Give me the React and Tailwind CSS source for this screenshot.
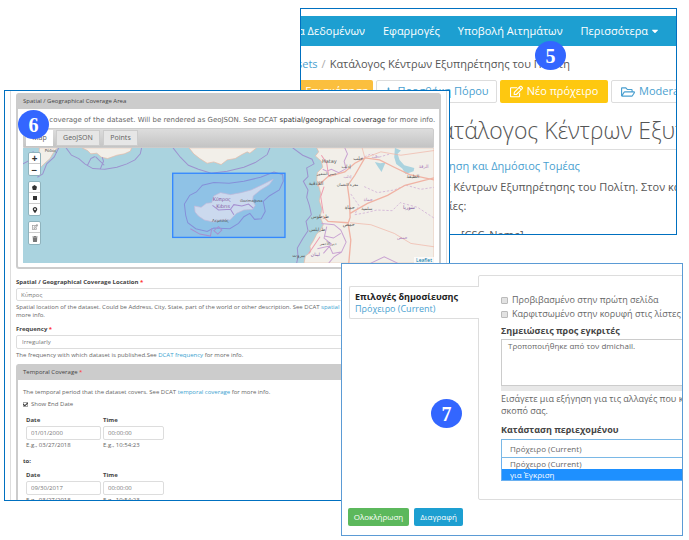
import { FaCaretDown, FaCheck, FaMapMarkerAlt, FaPlus, FaRegEdit, FaRegFolderOpen, FaTrash } from 'react-icons/fa';

const Badge = ({ children, className }) => (
  <div className={`absolute flex h-[29px] w-[31px] items-center justify-center rounded-[50%] bg-[#3366ff] font-['Liberation_Serif',serif] text-[20px] leading-none font-bold text-white ${className}`}>
    {children}
  </div>
);

const MapLabel = ({ x, y, size = 14, fill = '#555', children }) => (
  <text x={x} y={y} fontSize={size} fill={fill} textAnchor="middle" fontFamily="DejaVu Sans, sans-serif">{children}</text>
);

// --- COVERAGE MAP ---
const CoverageMap = () => (
  <svg viewBox="69 204 1230 345" preserveAspectRatio="xMidYMid slice" className="block h-[115px] w-full bg-[#aad3df]" role="img" aria-label="Map of Cyprus">
    {/* land */}
    <g fill="#f2efe9" stroke="#e8b9a4" strokeWidth="2">
      <path d="M118 204 L116 240 L122 262 L134 250 L150 236 L158 222 L172 204 Z" />
      <path d="M246 204 L262 212 L272 222 L290 220 L304 232 L322 236 L350 226 L372 222 L390 214 L394 204 Z" />
      <path d="M566 204 L580 222 L598 236 L620 250 L640 246 L662 254 L680 240 L704 236 L724 224 L740 216 L748 220 L768 204 Z" />
      <path d="M948 204 L954 216 L944 228 L962 244 L966 262 L950 278 L948 300 L954 318 L960 340 L956 362 L964 388 L958 410 L968 434 L958 452 L948 462 L938 482 L928 498 L930 516 L914 528 L910 549 L1299 549 L1299 204 Z" />
    </g>
    <g fill="#aad3df">
      <path d="M1182 204 L1200 212 L1190 222 L1196 240 L1210 256 L1240 264 L1238 274 L1214 282 L1204 266 L1186 252 L1180 232 Z" />
      <path d="M1122 246 L1138 250 L1154 248 L1148 262 L1142 276 L1132 262 Z" />
    </g>
    {/* territorial waters */}
    <g fill="none" stroke="#9c92cf" strokeWidth="3">
      <path d="M69 252 L84 244 L100 214 M176 204 L162 232 L140 252 L128 282 L112 292" />
      <path d="M198 204 L214 226 L236 236 L254 252 L278 266 L314 268 L350 262 L380 252 L404 240 L420 222 L424 204 M262 256 L272 236 L284 230 M300 268 L310 244 L306 232 M286 230 L312 256" />
      <path d="M518 204 L540 232 L564 256 L594 268 L632 280 L680 274 L730 262 L764 248 L800 224 L808 204" />
      <path d="M876 204 L906 226 L934 238 L940 252 L918 264 L922 290 L908 304 L922 330 L918 352 L926 376 L932 404 L916 424 L922 452 L906 476 L890 504 L892 530 L888 549" />
      <path d="M562 428 L556 406 L552 372 L568 346 L588 336 L606 316 L640 308 L686 310 L730 304 L780 292 L820 276 L846 284 L848 304 L836 330 L806 348 L788 364 L794 394 L782 416 L762 418 L748 400 L730 410 L714 430 L688 446 L640 444 L620 454 L586 446 Z" />
    </g>
    {/* borders */}
    <g fill="none" stroke="#c9a3d2" strokeWidth="3">
      <path d="M1032 204 L1040 222 L1030 244 L1036 266 L1014 278 L992 268 L978 274 L966 268" />
      <path d="M1080 236 L1110 222 L1134 232 L1168 222 M1090 320 L1130 338 L1180 330 L1216 316 L1260 328 L1299 322 M1050 342 L1074 376 L1062 404 L1096 398 L1128 390 L1174 392 L1198 368 L1250 382 L1299 414" strokeDasharray="7 5" strokeWidth="2" />
      <path d="M962 430 L1000 434 L1020 450 L1036 486 L1022 516 L1000 530 L984 549 M972 468 L998 474 L1020 460 M950 506 L986 498 L996 520 L1020 516 M978 440 L970 474 L992 492 L968 520 M1110 549 L1150 530 L1190 549" />
    </g>
    {/* roads */}
    <g fill="none" stroke="#f0b3a4" strokeWidth="4">
      <path d="M950 318 L982 290 L1032 276 L1062 250 L1092 234 L1136 240 L1180 262 L1226 284 L1299 300 M1092 234 L1062 286 L1040 318 L1046 360 L1048 412 L1042 430 L1050 480 L1044 549 M966 408 L982 424 L1042 428 M1048 400 L1100 370 L1160 346 L1212 316 L1299 294" />
      <path d="M1084 204 L1092 234 M1092 234 L1140 216 L1200 226 L1299 212 M1048 428 L1110 434 L1180 460 L1230 490 L1299 500" strokeWidth="2" />
      <path d="M970 320 L960 350 L968 400 M958 470 L924 520 M984 290 L978 250 L962 226" stroke="#ef9db0" strokeWidth="3" />
    </g>
    {/* selected area */}
    <rect x="517" y="280" width="336" height="192" fill="#3388ff" fillOpacity=".22" stroke="#3388ff" strokeWidth="4" />
    <path d="M582 378 L602 382 L618 370 L634 368 L640 348 L660 338 L690 344 L722 338 L752 330 L790 312 L818 298 L806 314 L780 330 L758 348 L756 362 L764 376 L756 388 L730 390 L708 400 L688 420 L660 420 L640 426 L612 420 L594 408 L584 396 Z" fill="#cbd9ee" stroke="#c5b8d9" strokeWidth="2" />
    <path d="M636 376 L654 390 L690 388 L700 374 L724 378 L744 372 L758 384 M570 446 L598 462 L630 468 L634 444 M640 452 L652 462 L664 450 L654 440 Z M690 388 L700 404" fill="none" stroke="#a58fd0" strokeWidth="3" />
    <MapLabel x={664} y={362} size={15} fill="#84599f">Κύπρος</MapLabel>
    <MapLabel x={668} y={383} size={15} fill="#84599f">Kıbrıs</MapLabel>
    <MapLabel x={752} y={367} size={11}>Gazimağusa</MapLabel>
    <MapLabel x={660} y={425} size={12}>Λεμεσός</MapLabel>
    <MapLabel x={152} y={215} size={12}>Ρόδος</MapLabel>
    <MapLabel x={986} y={249} size={15}>Hatay</MapLabel>
    <MapLabel x={1072} y={239} size={15}>حلب</MapLabel>
    <MapLabel x={1124} y={235} size={12} fill="#ac80b9">حلب</MapLabel>
    <MapLabel x={1036} y={265} size={14}>إدلب</MapLabel>
    <MapLabel x={1268} y={263} size={14} fill="#ac80b9">الرقة</MapLabel>
    <MapLabel x={1236} y={294} size={14}>الطبقة</MapLabel>
    <MapLabel x={978} y={286} size={11}>جسر الشغور</MapLabel>
    <MapLabel x={1040} y={294} size={12} fill="#ac80b9">إدلب</MapLabel>
    <MapLabel x={946} y={314} size={15}>اللاذقية</MapLabel>
    <MapLabel x={1040} y={318} size={12}>معرة النعمان</MapLabel>
    <MapLabel x={1102} y={362} size={13} fill="#ac80b9">حماة</MapLabel>
    <MapLabel x={1047} y={386} size={15}>حماة</MapLabel>
    <MapLabel x={1098} y={390} size={13}>سلمية</MapLabel>
    <MapLabel x={1224} y={386} size={15} fill="#84599f">سوريا</MapLabel>
    <MapLabel x={958} y={415} size={14}>طرطوس</MapLabel>
    <MapLabel x={1044} y={437} size={15}>حمص</MapLabel>
    <MapLabel x={950} y={454} size={14}>طرابلس</MapLabel>
    <MapLabel x={1204} y={476} size={13} fill="#ac80b9">حمص</MapLabel>
    <MapLabel x={982} y={494} size={12}>دير الأحمر</MapLabel>
    <MapLabel x={894} y={530} size={15}>بيروت</MapLabel>
    <MapLabel x={944} y={528} size={14} fill="#84599f">لبنان</MapLabel>
  </svg>
);

const toolGroup = 'flex flex-col divide-y divide-[#ccc] overflow-hidden rounded-[2px] border border-[#8fb3bd] bg-white';
const toolButton = 'flex h-[11px] w-[11px] items-center justify-center text-[#333]';

const MapTools = () => (
  <div className="absolute top-[4px] left-[5px] flex flex-col gap-[5px]">
    <div className={toolGroup}>
      <button aria-label="Zoom in" className={`${toolButton} text-[10px] leading-none font-bold`}>+</button>
      <button aria-label="Zoom out" className={`${toolButton} text-[10px] leading-none font-bold`}>−</button>
    </div>
    <div className={toolGroup}>
      <button aria-label="Draw a polygon" className={toolButton}><svg viewBox="0 0 6 6" className="size-[5px]"><path d="M3 0 L6 2.2 L5 6 H1 L0 2.2 Z" fill="#333" /></svg></button>
      <button aria-label="Draw a rectangle" className={toolButton}><svg viewBox="0 0 6 6" className="size-[4px]"><path d="M0 0h6v6H0z" fill="#333" /></svg></button>
      <button aria-label="Draw a marker" className={toolButton}><FaMapMarkerAlt size={6} /></button>
    </div>
    <div className={toolGroup}>
      <button aria-label="Edit layers" className={`${toolButton} text-[#777]`}><FaRegEdit size={6} /></button>
      <button aria-label="Delete layers" className={`${toolButton} text-[#777]`}><FaTrash size={6} /></button>
    </div>
  </div>
);

const Required = () => <span className="text-[#f33]">*</span>;

const inputStyle = 'block border border-[#ddd] rounded-[2px] bg-white text-[6px] leading-[8px] text-[#777]';

const DateRow = ({ id, date }) => (
  <div className="flex gap-[2px] pl-[3px]">
    <div className="w-[75px]">
      <label htmlFor={`${id}-date`} className="block font-bold text-[#444]">Date</label>
      <input id={`${id}-date`} defaultValue={date} className={`${inputStyle} mt-[2px] h-[14px] w-full px-[4px]`} />
      <p className="mt-px">E.g., 03/27/2018</p>
    </div>
    <div className="w-[61px]">
      <label htmlFor={`${id}-time`} className="block font-bold text-[#444]">Time</label>
      <input id={`${id}-time`} defaultValue="00:00:00" className={`${inputStyle} mt-[2px] h-[14px] w-full px-[4px]`} />
      <p className="mt-px">E.g., 10:54:23</p>
    </div>
  </div>
);

// --- DATASET PAGE ---
const DatasetPage = () => (
  <section className="absolute top-[8px] right-[12px] left-[300px] h-[227px] overflow-hidden border border-[#0070c0] bg-white whitespace-nowrap text-[#555]">
    <nav className="mt-[7px] flex h-[30px] items-center gap-[18px] bg-[#1d9fd1] text-[11px] text-white">
      <a href="#datasets" className="-ml-[3px]">α Δεδομένων</a>
      <a href="#apps">Εφαρμογές</a>
      <a href="#requests">Υποβολή Αιτημάτων</a>
      <a href="#more" className="flex items-center gap-[2px]">Περισσότερα <FaCaretDown size={10} /></a>
    </nav>
    <div className="mt-[10px] flex h-[16px] items-center gap-[4px] text-[11px]">
      <a href="#sets" className="-ml-[4px] text-[#4a9fd0]">sets</a>
      <span className="text-[#aaa]">/</span>
      <span>Κατάλογος Κέντρων Εξυπηρέτησης του Πολίτη</span>
    </div>
    <div className="mt-[8px] flex h-[23px] gap-[3px] text-[11px] text-[#4a9fd0]">
      <button className="w-[72px] shrink-0 rounded-r-[2px] bg-[#fbbf3e] text-white">Επισκόπηση</button>
      <button className="flex w-[121px] shrink-0 items-center justify-center gap-[4px] rounded-[2px] border border-[#ddd]"><FaPlus size={9} />Προσθήκη Πόρου</button>
      <button className="flex w-[108px] shrink-0 items-center justify-center gap-[4px] rounded-[2px] bg-[#fec810] text-white"><FaRegEdit size={13} />Νέο πρόχειρο</button>
      <button className="flex w-[108px] shrink-0 items-center gap-[4px] rounded-[2px] border border-[#ddd] pl-[9px]"><FaRegFolderOpen size={14} />Moderate</button>
    </div>
    <h1 className="mt-[11px] border-b border-[#ddd] pb-[3px] pl-[126px] text-[23px] leading-[32px] font-light">Κατάλογος Κέντρων Εξυπηρέτησης</h1>
    <div className="pl-[94px] text-[11px] leading-[19px]">
      <a href="#group" className="mt-[6px] block text-[#4a9fd0]">Διακυβέρνηση και Δημόσιος Τομέας</a>
      <p className="mt-[2px]">Κατάλογος Κέντρων Εξυπηρέτησης του Πολίτη. Στον κατάλογο</p>
      <p>πληροφορίες:</p>
      <p className="mt-[10px] pl-[66px]">[CSC_Name]</p>
    </div>
  </section>
);

// --- COVERAGE FORM ---
const CoverageForm = () => (
  <section className="absolute top-[90px] left-[4px] h-[411px] w-[446px] overflow-hidden border border-[#0070c0] bg-white pr-[2px] pl-[5px]">
    <div className="border-x border-[#ddd] px-[5px] pt-[2px] pb-[20px] text-[6px] leading-[8px] text-[#666]">
      <div className="rounded-[3px] border-2 border-t-0 border-[#ccc]">
        <h2 className="bg-[#ccc] px-[5px] py-[4px] text-[#444]">Spatial / Geographical Coverage Area</h2>
        <div className="px-[5px] pt-[6px] pb-[4px] font-['Noto_Sans',sans-serif] text-[7px]">
          <p className="pb-[2px] font-['DejaVu_Sans',sans-serif] leading-[11px] whitespace-nowrap">Spatial coverage of the dataset. Will be rendered as GeoJSON. See DCAT <a href="#dcat" className="text-[#333]">spatial/geographical coverage</a> for more info.</p>
          <div className="flex h-[20px] items-center gap-[3px] rounded-t-[2px] border border-[#ccc] bg-linear-to-b from-[#ddd] to-[#c4c4c4] px-[2px]">
            <button className="h-[16px] w-[27px] bg-white">Map</button>
            <button className="h-[16px] w-[44px] border border-[#ccc] bg-[#e6e6e6]">GeoJSON</button>
            <button className="h-[16px] w-[35px] border border-[#ccc] bg-[#e6e6e6]">Points</button>
          </div>
          <div className="relative">
            <CoverageMap />
            <MapTools />
            <a href="#leaflet" className="absolute right-0 bottom-0 bg-white/70 px-[2px] text-[5px] leading-[6px] text-[#0078a8]">Leaflet</a>
          </div>
        </div>
      </div>

      <label htmlFor="location" className="mt-[9px] block font-bold text-[#444]">Spatial / Geographical Coverage Location <Required /></label>
      <input id="location" defaultValue="Κύπρος" className={`${inputStyle} mt-[2px] h-[13px] w-full px-[4px]`} />
      <p className="mt-[2px] whitespace-nowrap">Spatial location of the dataset. Could be Address, City, State, part of the world or other description. See DCAT <a href="#spatial" className="text-[#3a9fd0]">spatial coverage</a> for<br />more info.</p>

      <label htmlFor="frequency" className="mt-[6px] block font-bold text-[#444]">Frequency <Required /></label>
      <select id="frequency" className={`${inputStyle} mt-[2px] h-[14px] w-full appearance-none px-[5px]`}>
        <option>Irregularly</option>
      </select>
      <p className="mt-[2px]">The frequency with which dataset is published.See <a href="#freq" className="text-[#3a9fd0]">DCAT frequency</a> for more info.</p>

      <div className="mt-[5px] rounded-[3px] border-2 border-t-0 border-[#ccc]">
        <h2 className="bg-[#ccc] px-[5px] py-[4px] text-[#444]">Temporal Coverage <Required /></h2>
        <div className="px-[5px] pt-[8px] pb-[10px]">
          <p>The temporal period that the dataset covers. See DCAT <a href="#temporal" className="text-[#3a9fd0]">temporal coverage</a> for more info.</p>
          <label className="mt-[4px] mb-[8px] flex items-center gap-[3px]">
            <span className="relative flex">
              <input type="checkbox" defaultChecked className="size-[5px] appearance-none border border-[#aaa]" />
              <FaCheck size={5} className="absolute inset-0 text-[#333]" />
            </span>
            Show End Date
          </label>
          <DateRow id="start" date="01/01/2000" />
          <p className="mt-[8px] mb-[6px] font-bold text-[#444]">to:</p>
          <DateRow id="end" date="09/30/2017" />
        </div>
      </div>
    </div>
  </section>
);

// --- PUBLISHING OPTIONS ---
const PublishForm = () => (
  <section className="absolute top-[263px] right-[6px] left-[341px] h-[273px] overflow-hidden border border-[#5b9bd5] bg-white pt-[11px] text-[9px] leading-[12px] whitespace-nowrap text-[#666]">
    <div className="flex pl-[7px]">
      <div className="z-10 mt-[11px] -mr-px h-[33px] w-[130px] shrink-0 rounded-l-[2px] border border-r-0 border-[#ddd] bg-white pt-[4px] pl-[5px]">
        <p className="font-bold text-[#222]">Επιλογές δημοσίευσης</p>
        <a href="#draft" className="block text-[#4a9fd0]">Πρόχειρο (Current)</a>
      </div>
      <div className="-mr-[40px] h-[225px] grow rounded-[2px] border border-[#ddd] pt-[17px] pl-[22px]">
        <label className="flex h-[14px] items-center gap-[4px]"><input type="checkbox" className="size-[7px] appearance-none rounded-[1px] border border-[#bbb] bg-[#e2e2e2]" />Προβιβασμένο στην πρώτη σελίδα</label>
        <label className="flex h-[14px] items-center gap-[4px]"><input type="checkbox" className="size-[7px] appearance-none rounded-[1px] border border-[#bbb] bg-[#e2e2e2]" />Καρφιτσωμένο στην κορυφή στις λίστες</label>
        <label htmlFor="notes" className="mt-[4px] block font-bold text-[#444]">Σημειώσεις προς εγκριτές</label>
        <textarea id="notes" defaultValue="Τροποποιήθηκε από τον dmichail." className="mt-[2px] block h-[47px] w-full resize-none border border-[#ccc] px-[6px] text-[8px] leading-[12px]" />
        <div className="h-[5px] bg-[#e8e8e8]" />
        <p className="mt-[2px]">Εισάγετε μια εξήγηση για τις αλλαγές που κάνετε.<br />σκοπό σας.</p>
        <label htmlFor="state" className="mt-[7px] block font-bold text-[#444]">Κατάσταση περιεχομένου</label>
        <div className="relative mt-[3px]">
          <select id="state" className="block h-[19px] w-full appearance-none border border-[#7ab8e6] bg-white px-[8px] text-[8px]">
            <option>Πρόχειρο (Current)</option>
          </select>
          <ul className="absolute top-full left-0 w-full border border-t-0 border-[#6ab0f0] bg-white text-[8px] leading-[11px]">
            <li className="px-[8px]">Πρόχειρο (Current)</li>
            <li className="bg-[#1e90ff] px-[8px] text-white">για Έγκριση</li>
          </ul>
        </div>
      </div>
    </div>
    <div className="mt-[8px] flex gap-[5px] pl-[6px] text-[8px] text-white">
      <button className="h-[18px] w-[61px] rounded-[2px] bg-[#5cb85c]">Ολοκλήρωση</button>
      <button className="h-[18px] w-[49px] rounded-[2px] bg-[#1d9fd1]">Διαγραφή</button>
    </div>
  </section>
);

export default function App() {
  return (
    <main className="relative min-h-[540px] overflow-hidden bg-white font-['Open_Sans','Noto_Sans',sans-serif]">
      <DatasetPage />
      <CoverageForm />
      <PublishForm />
      <Badge className="top-[41px] left-[535px]">5</Badge>
      <Badge className="top-[110px] left-[18px]">6</Badge>
      <Badge className="top-[399px] left-[431px]">7</Badge>
    </main>
  );
}
